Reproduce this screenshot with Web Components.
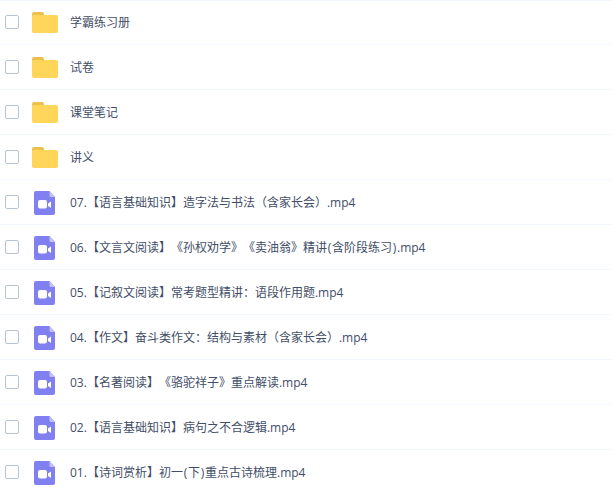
<!DOCTYPE html>
<html>
<head>
<meta charset="utf-8">
<style>
  html, body { margin: 0; padding: 0; background: #fff; overflow: hidden; }
  body { font-family: "Open Sans", "Noto Sans CJK SC", sans-serif; }
  /* brackets are a bit wider in the original font */
  .br { padding: 0 .75px; }
</style>
</head>
<body>
<file-list>
  <file-row type="folder">学霸练习册</file-row>
  <file-row type="folder">试卷</file-row>
  <file-row type="folder">课堂笔记</file-row>
  <file-row type="folder">讲义</file-row>
  <file-row type="video">07.【语言基础知识】造字法与书法（含家长会）.mp4</file-row>
  <file-row type="video">06.【文言文阅读】《孙权劝学》《卖油翁》精讲<span class="br">(</span>含阶段练习<span class="br">)</span>.mp4</file-row>
  <file-row type="video">05.【记叙文阅读】常考题型精讲：语段作用题.mp4</file-row>
  <file-row type="video">04.【作文】奋斗类作文：结构与素材（含家长会）.mp4</file-row>
  <file-row type="video">03.【名著阅读】《骆驼祥子》重点解读.mp4</file-row>
  <file-row type="video">02.【语言基础知识】病句之不合逻辑.mp4</file-row>
  <file-row type="video">01.【诗词赏析】初一<span class="br">(</span>下<span class="br">)</span>重点古诗梳理.mp4</file-row>
</file-list>
<script>
class FileList extends HTMLElement {
  constructor() {
    super();
    this.attachShadow({mode: "open"}).innerHTML = `<style>
      :host { display: block; border-top: 1px solid #f2f6fd; }
      ::slotted(file-row:first-child) { margin-top: -2px; }
    </style><slot></slot>`;
  }
}

const ICONS = {
  folder: `<svg width="26" height="21" viewBox="0 0 26 21">
    <path d="M0 2a2 2 0 0 1 2-2h8a2 2 0 0 1 2 2v2H0z" fill="#ecc04f"/>
    <path d="M0 5a2 2 0 0 1 2-2h22a2 2 0 0 1 2 2v14a2 2 0 0 1-2 2H2a2 2 0 0 1-2-2z" fill="#ffd659"/>
  </svg>`,
  video: `<svg width="21" height="24" viewBox="0 0 21 24">
    <path d="M2 0h13.500L21 6v16a2 2 0 0 1-2 2H2a2 2 0 0 1-2-2V2a2 2 0 0 1 2-2z" fill="#8180f1"/>
    <path d="M15.500 0L21 6h-4a1.500 1.500 0 0 1-1.500-1.500z" fill="#c3c2f8"/>
    <rect x="4" y="9" width="9" height="8.500" rx="2" fill="#fff"/>
    <path d="M14 12.500l3-2v6.500l-3-2z" fill="#fff"/>
  </svg>`
};

class FileRow extends HTMLElement {
  constructor() {
    super();
    this.attachShadow({mode: "open"});
  }

  connectedCallback() {
    const type = this.getAttribute("type");
    this.shadowRoot.innerHTML = `<style>
      :host {
        display: flex;
        align-items: center;
        height: 44px;
        border-top: 1px solid #f2f6fd;
        font-size: 12px;
        color: #424e67;
        text-spacing-trim: space-all;
      }
      .check {
        width: 12px;
        height: 12px;
        margin-left: 5px;
        border: 1px solid #b8c4d4;
        border-radius: 2px;
        flex: none;
      }
      .icon {
        flex: none;
        width: 25px;
        margin-left: 13px;
        margin-right: 13px;
      }
      .folder { padding-top: 1px; }
      .video { padding: 2px 0 0 2px; width: 23px; }
      svg { display: block; }
    </style>
    <div class="check"></div>
    <div class="icon ${type}">${ICONS[type]}</div>
    <slot></slot>`;
  }
}

customElements.define("file-list", FileList);
customElements.define("file-row", FileRow);
</script>
</body>
</html>
